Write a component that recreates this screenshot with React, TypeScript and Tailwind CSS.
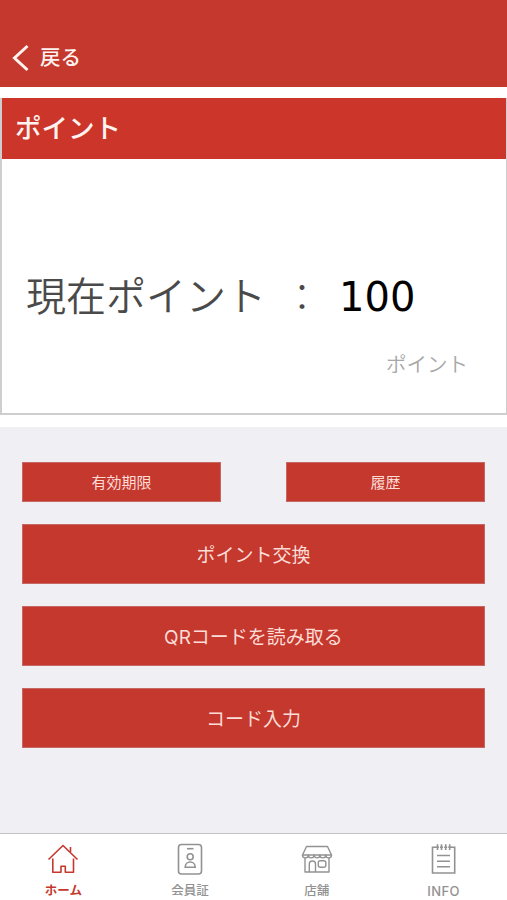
import type { ReactNode } from "react";

type Tab = {
  label: string;
  icon: ReactNode;
  active?: boolean;
};

const stroke = {
  width: 32,
  height: 32,
  viewBox: "0 0 32 32",
  fill: "none",
  stroke: "currentColor",
  strokeWidth: 1.6,
};

const tabs: Tab[] = [
  {
    label: "ホーム",
    active: true,
    icon: (
      <svg {...stroke} strokeWidth={1.6} strokeLinejoin="round">
        <path d="M1.5 16.5 16 2.5 30.5 16.5" />
        <path d="M23.5 9V4" />
        <path d="M5.8 15.5V29.3H14V23.3H18.3V29.3H26.5V15.5" />
      </svg>
    ),
  },
  {
    label: "会員証",
    icon: (
      <svg {...stroke}>
        <rect x="4.5" y="1.5" width="23" height="29.5" rx="3" />
        <path d="M13 5.7H19.5" />
        <circle cx="16.2" cy="13.8" r="3" />
        <path d="M11.2 24.3C11.2 17.3 21.2 17.3 21.2 24.3Z" />
      </svg>
    ),
  },
  {
    label: "店舗",
    icon: (
      <svg {...stroke} strokeWidth={1.4} strokeLinejoin="round">
        <path d="M5.5 3.5H26.5L30.5 12H1.5Z" />
        <path d="M1.5 12A2.9 2.9 0 0 0 7.3 12A2.9 2.9 0 0 0 13.1 12A2.9 2.9 0 0 0 18.9 12A2.9 2.9 0 0 0 24.7 12A2.9 2.9 0 0 0 30.5 12" />
        <path d="M4 15V29H28V15" />
        <path d="M8.3 29V21C8.3 17 14.5 17 14.5 21V29" />
        <rect x="17.3" y="17.7" width="7.5" height="6.5" rx="2" />
      </svg>
    ),
  },
  {
    label: "INFO",
    icon: (
      <svg {...stroke}>
        <path d="M8.3 4.3H4.5V30H26.700V4.300H23" />
        <path d="M9.5 1.300V7M13.500 1.300V7M17.700 1.300V7M21.700 1.300V7M7.500 4.300H11M12 4.300H15M16.200 4.300H19.200M20.200 4.300H24" />
        <path d="M9 12.500H22M9 18.300H22M9 23.800H22" />
      </svg>
    ),
  },
];

function ActionButton({ children, small }: { children: ReactNode; small?: boolean }) {
  return (
    <button
      className={`flex items-center justify-center border border-[#c56762] bg-[#c5382d] text-[#fbdcd7] ${
        small ? "h-10 w-[199px] pt-[3px] text-[15px]" : "h-[60px] w-full pt-1 text-[19px]"
      }`}
    >
      {children}
    </button>
  );
}

export default function App() {
  return (
    <div className="flex h-[900px] w-full flex-col bg-[#efeff4] font-[Inter,'Noto_Sans_CJK_JP',sans-serif]">
      <header className="flex h-[87px] shrink-0 items-end bg-[#c5382d] pb-[15px] pl-3 text-[#fff3f0]">
        <button className="flex items-center">
          <svg width="17" height="28" viewBox="0 0 17 28" fill="none" stroke="currentColor" strokeWidth="3">
            <path d="M15.5 2 2.5 14 15.5 26" />
          </svg>
          <span className="ml-[11px] pt-px text-[20.5px] leading-7 font-medium">戻る</span>
        </button>
      </header>

      <section className="h-[340px] shrink-0 bg-white pt-[11px]">
        <div className="h-[317px] border-r border-b-2 border-l-2 border-[#cecece]">
          <h1 className="flex h-[61px] items-center bg-[#cb352a] pt-px pl-[13px] text-[26.5px] font-medium text-[#fff3f0]">
            ポイント
          </h1>
          <div className="mt-[108px] flex h-[54px] items-center pl-6 text-[40px] text-[#4a4a4a]">
            <span className="w-[257px] font-['Noto_Sans_CJK_JP',sans-serif] font-[350]">現在ポイント</span>
            <span className="w-14 font-['Noto_Sans_CJK_JP',sans-serif] text-[38px] font-light">：</span>
            <span className="pt-1.5 font-['DejaVu_Sans',sans-serif] text-[40px] text-black">100</span>
          </div>
          <p className="mt-7 pr-[38px] text-right text-[20.5px] leading-[32px] font-[350] text-[#a8a8a8]">ポイント</p>
        </div>
      </section>

      <main className="flex grow flex-col gap-[22px] px-[22px] pt-[35px]">
        <div className="flex justify-between">
          <ActionButton small>有効期限</ActionButton>
          <ActionButton small>履歴</ActionButton>
        </div>
        <ActionButton>ポイント交換</ActionButton>
        <ActionButton>QRコードを読み取る</ActionButton>
        <ActionButton>コード入力</ActionButton>
      </main>

      <nav className="grid h-[67px] shrink-0 grid-cols-4 border-t border-[#c4c4c6] bg-white">
        {tabs.map(t => (
          <button
            key={t.label}
            className={`flex flex-col items-center pt-[9px] text-[12.5px] leading-[18px] ${
              t.active ? "font-bold text-[#c5382d]" : "font-medium text-[#929292]"
            }`}
          >
            {t.icon}
            <span className={t.label === "INFO" ? "mt-[7px] text-[13px] tracking-[0.4px]" : "mt-[7px]"}>{t.label}</span>
          </button>
        ))}
      </nav>
    </div>
  );
}
